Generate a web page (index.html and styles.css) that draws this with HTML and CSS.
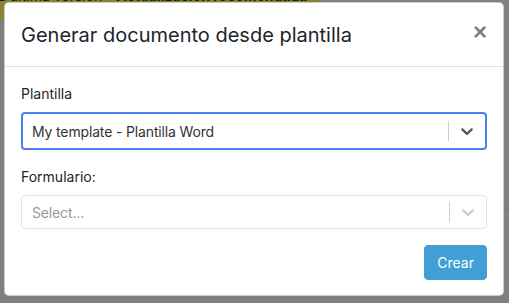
FILE: index.html
```html
<!DOCTYPE html>
<html lang="es">
<head>
  <meta charset="UTF-8">
  <meta name="viewport" content="width=device-width, initial-scale=1.0">
  <title>Generar documento desde plantilla</title>
  <link rel="stylesheet" href="styles.css">
</head>
<body>
  <div class="page">
    <div class="topbar">
      <div class="banner">
        <span>a última versión - <strong>Actualización recomendada</strong></span>
      </div>
    </div>
    <div class="page-row"></div>
  </div>

  <div class="backdrop">
    <div class="modal">
      <div class="modal-header">
        <h5 class="modal-title">Generar documento desde plantilla</h5>
        <button class="close" type="button">&times;</button>
      </div>
      <div class="modal-body">
        <div class="form-group">
          <label>Plantilla</label>
          <div class="select focused">
            <div class="select-value">My template - Plantilla Word</div>
            <span class="select-sep"></span>
            <span class="select-arrow">
              <svg viewBox="0 0 20 20" width="20" height="20"><path d="M4.516 7.548c0.436-0.446 1.043-0.481 1.576 0l3.908 3.747 3.908-3.747c0.533-0.481 1.141-0.446 1.574 0 0.436 0.445 0.408 1.197 0 1.615-0.406 0.418-4.695 4.502-4.695 4.502-0.217 0.223-0.502 0.335-0.787 0.335s-0.57-0.112-0.789-0.335c0 0-4.287-4.084-4.695-4.502s-0.436-1.17 0-1.615z"/></svg>
            </span>
          </div>
        </div>
        <div class="form-group">
          <label>Formulario:</label>
          <div class="select disabled">
            <div class="select-value placeholder">Select...</div>
            <span class="select-sep"></span>
            <span class="select-arrow">
              <svg viewBox="0 0 20 20" width="20" height="20"><path d="M4.516 7.548c0.436-0.446 1.043-0.481 1.576 0l3.908 3.747 3.908-3.747c0.533-0.481 1.141-0.446 1.574 0 0.436 0.445 0.408 1.197 0 1.615-0.406 0.418-4.695 4.502-4.695 4.502-0.217 0.223-0.502 0.335-0.787 0.335s-0.57-0.112-0.789-0.335c0 0-4.287-4.084-4.695-4.502s-0.436-1.17 0-1.615z"/></svg>
            </span>
          </div>
        </div>
        <div class="actions">
          <button class="btn" type="button">Crear</button>
        </div>
      </div>
    </div>
  </div>
</body>
</html>
```

FILE: styles.css
```css
* { box-sizing: border-box; }
body { margin: 0; font-family: Inter, "Noto Sans", sans-serif; color: #212529; background: #808080; overflow: hidden; }

/* dimmed page under the modal */
.page { height: 303px; }
.topbar { height: 29px; border-bottom: 1px solid #8a8a8a; }
.banner { width: 320px; height: 20px; background: #8b8233; color: #1c1a05; font-size: 14px; line-height: 14px; overflow: hidden; white-space: nowrap; }
.banner span { display: block; margin-top: -11px; margin-left: -2px; }
.page-row { height: 187px; border-bottom: 1px solid #8a8a8a; }

.backdrop { position: absolute; top: 0; left: 0; right: 0; bottom: 0; }
.modal { position: absolute; top: 2px; left: 4px; width: 500px; background: #fff; border: 1px solid rgba(0,0,0,.2); border-radius: 5px; }

.modal-header { display: flex; align-items: flex-start; padding: 17px 16px 16px; border-bottom: 1px solid #dee2e6; }
.modal-title { margin: 0; font-size: 20px; font-weight: 400; line-height: 30px; flex: 1; }
.close { border: none; background: none; padding: 0; margin: 0; font-family: "Liberation Sans", Arial, sans-serif; font-size: 24px; font-weight: 700; line-height: 24px; color: #000; opacity: .5; cursor: pointer; }

.modal-body { padding: 16px 16px 15px; }
.form-group { margin-bottom: 16px; }
label { display: block; font-size: 14px; line-height: 21px; margin-bottom: 8px; }

.select { display: flex; align-items: center; height: 38px; border: 1px solid #e3e3e3; border-radius: 4px; background: #fff; }
.select.focused { border: 2px solid #4c80f2; }
.select.disabled { height: 34px; }
.select-value { flex: 1; padding: 0 9px; font-size: 14px; letter-spacing: -0.15px; color: #333; white-space: nowrap; }
.select.disabled .select-value { padding-left: 10px; }
.placeholder { color: #999; }
.select-sep { width: 1px; height: 20px; background: #ccc; }
.select-arrow { display: flex; padding: 0 8px; }
.select-arrow svg { fill: #555; }
.select.disabled .select-arrow svg { fill: #ccc; }

.actions { display: flex; justify-content: flex-end; }
.btn { font-family: inherit; font-size: 14px; line-height: 21px; padding: 6px 12px; color: #fff; background: #419fd6; border: 1px solid #419fd6; border-radius: 4px; cursor: pointer; }
```
